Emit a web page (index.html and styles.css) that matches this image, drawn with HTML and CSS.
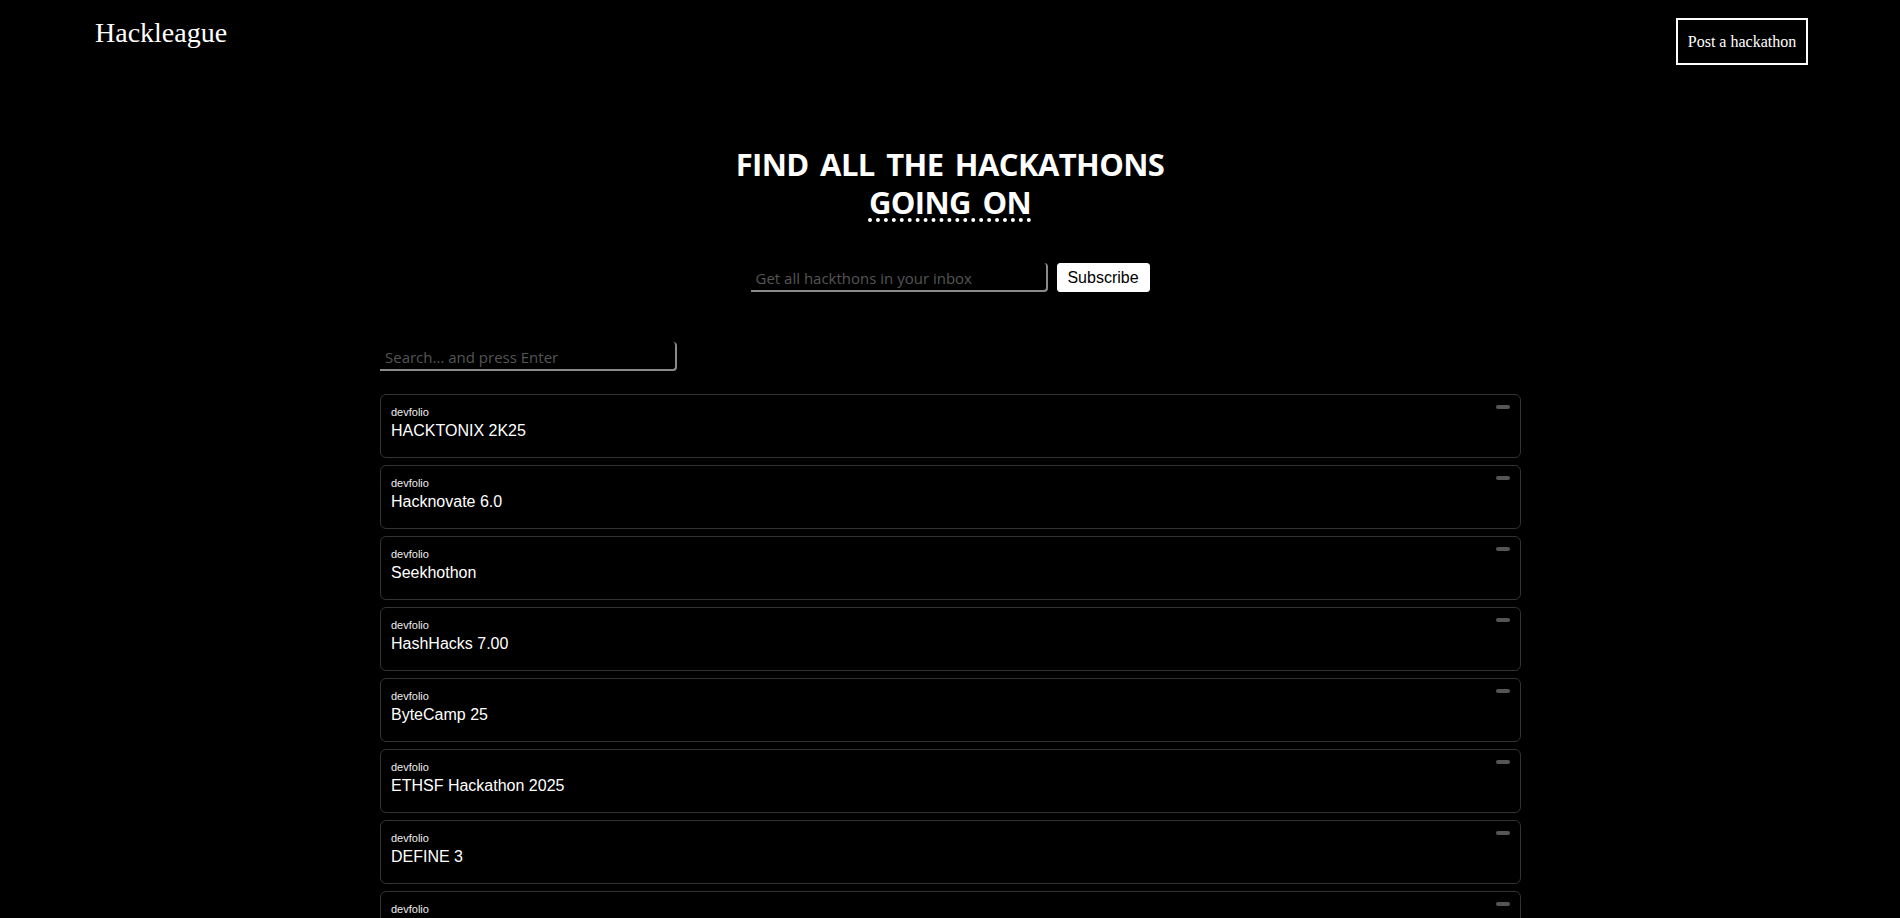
FILE: index.html
```html
<!DOCTYPE html>
<html>
<head>
<meta charset="utf-8">
<title>Hackleague</title>
<link rel="stylesheet" href="styles.css">
</head>
<body>
<header class="topbar">
  <div class="logo">Hackleague</div>
  <button class="post-btn">Post a hackathon</button>
</header>
<section class="hero">
  <h1 class="hero-title">FIND ALL THE HACKATHONS<br><span class="dotted">GOING ON</span></h1>
  <form class="subscribe">
    <input class="sub-input" type="email" placeholder="Get all hackthons in your inbox">
    <button class="sub-btn" type="button">Subscribe</button>
  </form>
</section>
<main class="list-wrap">
  <input class="search" type="text" placeholder="Search... and press Enter">
  <div class="cards">
    <div class="card"><div class="src">devfolio</div><div class="name">HACKTONIX 2K25</div><span class="pill"></span></div>
    <div class="card"><div class="src">devfolio</div><div class="name">Hacknovate 6.0</div><span class="pill"></span></div>
    <div class="card"><div class="src">devfolio</div><div class="name">Seekhothon</div><span class="pill"></span></div>
    <div class="card"><div class="src">devfolio</div><div class="name">HashHacks 7.00</div><span class="pill"></span></div>
    <div class="card"><div class="src">devfolio</div><div class="name">ByteCamp 25</div><span class="pill"></span></div>
    <div class="card"><div class="src">devfolio</div><div class="name">ETHSF Hackathon 2025</div><span class="pill"></span></div>
    <div class="card"><div class="src">devfolio</div><div class="name">DEFINE 3</div><span class="pill"></span></div>
    <div class="card"><div class="src">devfolio</div><div class="name">HackSphere</div><span class="pill"></span></div>
    <div class="card"><div class="src">devfolio</div><div class="name">Hack4Good</div><span class="pill"></span></div>
  </div>
</main>
</body>
</html>
```
FILE: styles.css
```css
* { box-sizing: border-box; }
html, body { background: #000; }
body {
  margin: 0;
  color: #fff;
  font-family: "Liberation Serif", "Times New Roman", serif;
}
.topbar {
  display: flex;
  justify-content: space-between;
  align-items: flex-start;
  padding: 15px 92px 0 95px;
  height: 70px;
}
.logo {
  font-size: 28px;
  line-height: 32px;
  margin-top: 2px;
}
.post-btn {
  margin-top: 3px;
  background: #000;
  color: #fff;
  border: 2px solid #fff;
  font-family: "Liberation Serif", serif;
  font-size: 16px;
  width: 132px;
  height: 47px;
  padding: 0;
}
.hero {
  display: flex;
  flex-direction: column;
  align-items: center;
  padding-top: 75px;
}
.hero-title {
  margin: 0;
  text-align: center;
  font-family: "Open Sans", sans-serif;
  font-weight: 700;
  font-size: 31px;
  line-height: 38px;
  letter-spacing: -0.6px;
  word-spacing: 4px;
}
.dotted {
  text-decoration: underline dotted #fff;
  text-decoration-thickness: 4px;
  text-underline-offset: 4px;
}
.subscribe {
  display: flex;
  gap: 9px;
  margin-top: 42px;
}
.sub-input, .search {
  background: #000;
  border: none;
  border-bottom: 2px solid #8a8a8a;
  border-right: 2px solid #8a8a8a;
  border-radius: 0 4px 4px 0;
  color: #ccc;
  font-family: "Open Sans", sans-serif;
  font-size: 15px;
  padding: 2px 5px 0;
  outline: none;
}
.sub-input { width: 297px; height: 29px; }
.sub-input::placeholder, .search::placeholder { color: #555; }
.sub-btn {
  background: #fff;
  color: #000;
  border: 1px solid #fff;
  border-radius: 3px;
  font-family: "Liberation Sans", Arial, sans-serif;
  font-size: 16px;
  width: 93px;
  height: 29px;
  padding: 0;
}
.list-wrap {
  width: 1142px;
  margin: 50px auto 0;
  padding-left: 1px;
}
.search { width: 297px; height: 29px; display: block; }
.cards {
  display: flex;
  flex-direction: column;
  gap: 7px;
  margin-top: 23px;
}
.card {
  position: relative;
  height: 64px;
  border: 1px solid #333;
  border-radius: 6px;
  padding: 11px 10px 0;
  font-family: "Liberation Sans", Arial, sans-serif;
}
.src { font-size: 11px; line-height: 13px; color: #eee; }
.name { font-size: 16px; line-height: 20px; margin-top: 2px; }
.pill {
  position: absolute;
  top: 10px;
  right: 10px;
  width: 14px;
  height: 4px;
  border-radius: 2px;
  background: #555;
}
```
